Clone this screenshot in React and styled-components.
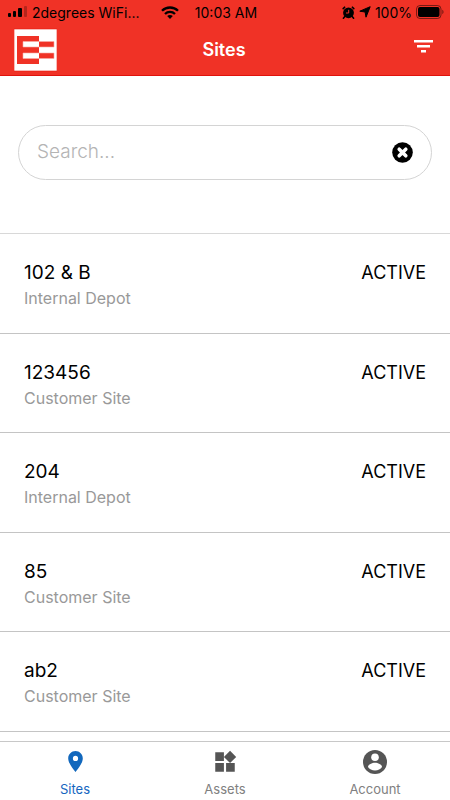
import styled, { createGlobalStyle } from "styled-components";
import { MdLocationOn, MdWidgets } from "react-icons/md";

const GlobalStyle = createGlobalStyle`
  * {
    box-sizing: border-box;
  }
  body {
    margin: 0;
    background-color: #fff;
    color: #000;
    font-family: Inter, "Liberation Sans", sans-serif;
  }
`;

const Screen = styled.div`
  display: flex;
  flex-direction: column;
  min-height: 100vh;
`;

const Header = styled.header`
  background-color: #f03226;
  border-bottom: 1px solid #e0120c;
`;

const StatusBar = styled.div`
  display: grid;
  grid-template-columns: 1fr auto 1fr;
  align-items: center;
  height: 24px;
  padding: 0 6px 0 8px;
  font-size: 14px;
`;

const StatusGroup = styled.div`
  display: flex;
  align-items: center;
  justify-content: flex-end;
  gap: 4px;
`;

const NetworkGroup = styled(StatusGroup)`
  justify-content: space-between;
  padding-right: 16px;
`;

const TitleBar = styled.div`
  display: grid;
  grid-template-columns: 1fr auto 1fr;
  align-items: center;
  height: 51px;
  padding: 0 16px 0 14px;
  color: #fff;
`;

const Title = styled.h1`
  margin: 0;
  font-size: 18px;
  font-weight: 600;
`;

const IconButton = styled.button`
  display: flex;
  justify-self: end;
  padding: 0;
  border: none;
  background: none;
  color: inherit;
  cursor: pointer;
`;

const FilterButton = styled(IconButton)`
  padding-bottom: 8px;
`;

const SearchArea = styled.div`
  padding: 49px 18px 53px;
`;

const SearchBox = styled.form`
  display: flex;
  align-items: center;
  height: 55px;
  padding: 0 18px;
  border: 1px solid #d4d4d4;
  border-radius: 28px;
`;

const SearchInput = styled.input`
  flex: 1;
  min-width: 0;
  padding: 0 0 2px;
  border: none;
  outline: none;
  background: none;
  font-family: inherit;
  font-size: 19px;
  font-weight: 300;
  &::placeholder {
    color: #b4b4b4;
    opacity: 1;
  }
`;

const SiteList = styled.ul`
  display: flex;
  flex: 1;
  flex-direction: column;
  margin: 0 0 9px;
  padding: 0;
  border-top: 1px solid #d8d8d8;
  list-style: none;
`;

const SiteRow = styled.li`
  display: flex;
  flex: 1;
  justify-content: space-between;
  min-height: 90px;
  padding: 26px 24px 22px;
  border-bottom: 1px solid #c4c4c4;
  font-size: 18px;
  line-height: 26px;
`;

const SiteName = styled.div`
  font-size: 19px;
`;

const SiteType = styled.div`
  color: #999;
  font-size: 16px;
  line-height: 24px;
`;

const TabBar = styled.nav`
  display: flex;
  height: 59px;
  border-top: 1px solid #c8c8c8;
`;

const Tab = styled.a`
  display: flex;
  flex: 1;
  flex-direction: column;
  align-items: center;
  gap: 5px;
  padding-top: 5px;
  color: ${(props) => (props.$active ? "#1565c0" : "#808080")};
  font-size: 13px;
  line-height: 16px;
  text-decoration: none;
`;

const TabIcon = styled.span`
  display: flex;
  align-items: center;
  justify-content: center;
  height: 29px;
  color: ${(props) => (props.$active ? "#1268bd" : "#555")};
`;

const sites = [
  { name: "102 & B", type: "Internal Depot", status: "ACTIVE" },
  { name: "123456", type: "Customer Site", status: "ACTIVE" },
  { name: "204", type: "Internal Depot", status: "ACTIVE" },
  { name: "85", type: "Customer Site", status: "ACTIVE" },
  { name: "ab2", type: "Customer Site", status: "ACTIVE" },
];

const tabs = [
  { label: "Sites", Icon: MdLocationOn, size: 25 },
  { label: "Assets", Icon: MdWidgets, size: 26 },
  { label: "Account", Icon: AccountIcon, size: 24 },
];

function SignalIcon() {
  return (
    <svg width="20" height="12" viewBox="0 0 20 12" aria-hidden="true">
      <rect x="0" y="7" width="3" height="4" rx="1" />
      <rect x="5" y="5" width="3" height="6" rx="1" />
      <rect x="10" y="2" width="4" height="9" rx="1" />
      <rect x="16" y="0" width="3" height="11" rx="1" opacity="0.25" />
    </svg>
  );
}

function WifiIcon() {
  return (
    <svg width="18" height="13" viewBox="0 0 18 13" aria-hidden="true">
      <g fill="none" stroke="#000" strokeWidth="2.3">
        <path d="M1 4.8C5.4.4 12.6.4 17 4.8" />
        <path d="M4 8C6.8 5.2 11.2 5.2 14 8" />
      </g>
      <path d="M6.2 10C7.8 8.5 10.2 8.5 11.8 10L9 12.9Z" />
    </svg>
  );
}

function AlarmIcon() {
  return (
    <svg width="13" height="13" viewBox="0 0 13 13" aria-hidden="true">
      <circle cx="6.5" cy="6.8" r="5.4" />
      <path
        d="M1.2 2.6 2.6 1.2M10.4 1.2 11.8 2.6M2.8 10.5 1.4 12.2M10.2 10.5l1.4 1.7"
        stroke="#000"
        strokeWidth="1.6"
        strokeLinecap="round"
      />
      <path d="M6.7 3.8V7H4" fill="none" stroke="#f03226" />
    </svg>
  );
}

function LocationIcon() {
  return (
    <svg width="12" height="12" viewBox="0 0 12 12" aria-hidden="true">
      <path d="M11.2.7 7 11.2 6.1 6 .8 5.2Z" stroke="#000" strokeLinejoin="round" />
    </svg>
  );
}

function BatteryIcon() {
  return (
    <svg width="28" height="14" viewBox="0 0 28 14" aria-hidden="true">
      <rect x=".5" y=".5" width="24.5" height="13" rx="3.5" fill="none" stroke="#000" opacity="0.5" />
      <rect x="2" y="2" width="21.5" height="10" rx="2" />
      <path d="M26.3 4.8c1.6.6 1.6 3.8 0 4.4Z" opacity="0.5" />
    </svg>
  );
}

function Logo() {
  return (
    <svg width="43" height="45" viewBox="0 -1 43 45" role="img" aria-label="Logo">
      <path fill="#fff" stroke="#e8180f" strokeWidth="0.6" d="M0 1h43v42H0z" />
      <path fill="#f03226" d="M3 8h22v28H3z" />
      <path fill="#fff" d="M9 13.5h16V19H9zM9 25h16v5.5H9z" />
      <path fill="#f03226" d="M25 13.5h15V19H25zM25 25h15v5.5H25z" />
      <path
        fill="none"
        stroke="#f8aca6"
        strokeWidth="0.6"
        d="M9 13.5h31V19H9zM9 25h31v5.5H9z"
      />
    </svg>
  );
}

function FilterIcon() {
  return (
    <svg width="20" height="14" viewBox="0 0 20 14" fill="currentColor" aria-hidden="true">
      <rect x="0" y="1" width="19" height="2.5" />
      <rect x="3" y="6" width="13" height="2.5" />
      <rect x="7" y="11" width="5" height="2.5" />
    </svg>
  );
}

function ClearIcon() {
  return (
    <svg width="21" height="21" viewBox="0 0 21 21" aria-hidden="true">
      <circle cx="10.5" cy="10.5" r="10.3" />
      <path
        d="M7.2 7.2l6.6 6.6M13.8 7.2l-6.6 6.6"
        stroke="#fff"
        strokeWidth="3.6"
        strokeLinecap="round"
      />
    </svg>
  );
}

function AccountIcon({ size }) {
  return (
    <svg width={size} height={size} viewBox="0 0 24 24" aria-hidden="true">
      <circle cx="12" cy="12" r="12" fill="currentColor" />
      <circle cx="12" cy="7.2" r="3.8" fill="#fff" />
      <path fill="#fff" d="M5 17c0-2.6 4.2-4.2 7-4.2s7 1.6 7 4.2c-1.4 2.2-4 3.6-7 3.6S6.400 19.200 5 17Z" />
    </svg>
  );
}

function App() {
  return (
    <Screen>
      <GlobalStyle />
      <Header>
        <StatusBar>
          <NetworkGroup>
            <StatusGroup>
              <SignalIcon />
              <span>2degrees WiFi...</span>
            </StatusGroup>
            <WifiIcon />
          </NetworkGroup>
          <span>10:03 AM</span>
          <StatusGroup>
            <AlarmIcon />
            <LocationIcon />
            <span>100%</span>
            <BatteryIcon />
          </StatusGroup>
        </StatusBar>
        <TitleBar>
          <Logo />
          <Title>Sites</Title>
          <FilterButton type="button" aria-label="Filter">
            <FilterIcon />
          </FilterButton>
        </TitleBar>
      </Header>
      <SearchArea>
        <SearchBox role="search">
          <SearchInput type="text" placeholder="Search..." aria-label="Search" />
          <IconButton type="reset" aria-label="Clear search">
            <ClearIcon />
          </IconButton>
        </SearchBox>
      </SearchArea>
      <SiteList>
        {sites.map((site) => (
          <SiteRow key={site.name}>
            <div>
              <SiteName>{site.name}</SiteName>
              <SiteType>{site.type}</SiteType>
            </div>
            <div>{site.status}</div>
          </SiteRow>
        ))}
      </SiteList>
      <TabBar>
        {tabs.map(({ label, Icon, size }, index) => (
          <Tab key={label} href={`#${label.toLowerCase()}`} $active={index === 0}>
            <TabIcon $active={index === 0}>
              <Icon size={size} />
            </TabIcon>
            {label}
          </Tab>
        ))}
      </TabBar>
    </Screen>
  );
}

export default App;
